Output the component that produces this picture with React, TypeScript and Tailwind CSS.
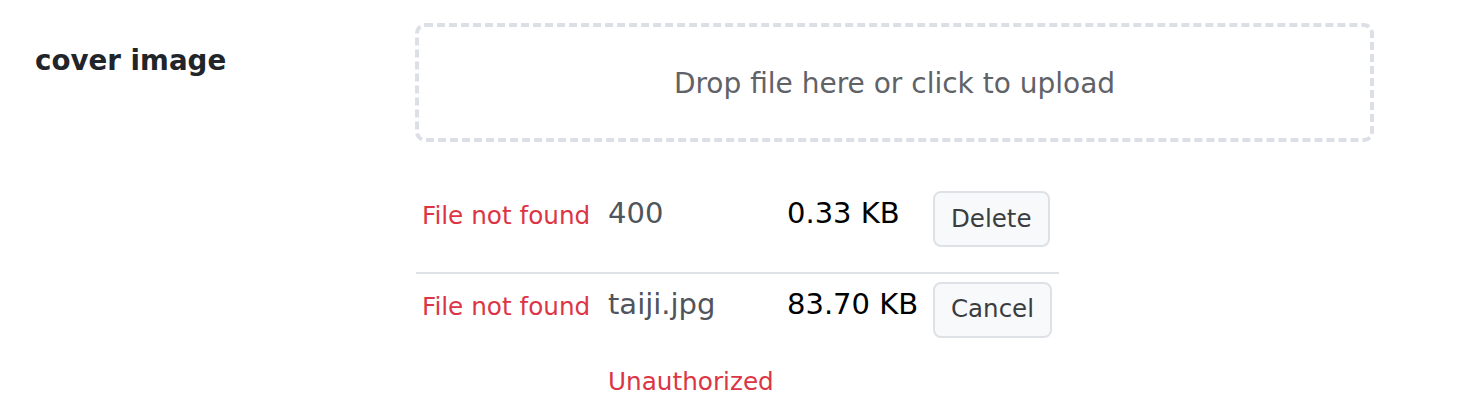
const font = "font-['DejaVu_Sans',Verdana,sans-serif]";

type FileRow = {
  status: string;
  name: string;
  size: string;
  action: string;
  error?: string;
};

const files: FileRow[] = [
  { status: "File not found", name: "400", size: "0.33 KB", action: "Delete" },
  {
    status: "File not found",
    name: "taiji.jpg",
    size: "83.70 KB",
    action: "Cancel",
    error: "Unauthorized",
  },
];

function Row({ file, first }: { file: FileRow; first: boolean }) {
  return (
    <div
      className={
        first
          ? "flex items-start pl-[6px] pb-[25px] border-b-2 border-[#dee2e6]"
          : "flex items-start pl-[6px] pt-[8px]"
      }
    >
      <div className="w-[186px] mt-[6px] text-[24.7px] leading-[1.5] text-[#dc3545]">
        {file.status}
      </div>
      <div className="w-[179px] mt-[1px]">
        <div className="text-[29px] leading-[1.5] text-[#50555b]">{file.name}</div>
        {file.error && (
          <div className="mt-[37px] text-[24.7px] leading-[1.5] text-[#dc3545]">
            {file.error}
          </div>
        )}
      </div>
      <div className="w-[146px] mt-[1px] text-[29px] leading-[1.5] text-black">{file.size}</div>
      <button className="px-[16px] py-[7.5px] text-[24.5px] leading-[1.5] text-[#3a3d40] bg-[#f8f9fa] border-2 border-[#dee2e6] rounded-[8px]">
        {file.action}
      </button>
    </div>
  );
}

export default function App() {
  return (
    <div className={`${font} bg-white w-[1462px] h-[414px] overflow-hidden flex pl-[35px] pt-[23px]`}>
      <div className="w-[380px] pt-[17px] text-[27.7px] leading-[1.5] font-bold text-[#212529]">
        cover image
      </div>
      <div className="flex flex-col">
        <div className="w-[959px] h-[119px] pt-[2px] flex items-center justify-center border-4 border-dashed border-[#dcdfe6] rounded-[10px] text-[28px] leading-[1.5] text-[#5f6368]">
          Drop file here or click to upload
        </div>
        <div className="w-[643px] ml-[1px] mt-[49px]">
          {files.map((f, i) => (
            <Row key={f.name} file={f} first={i === 0} />
          ))}
        </div>
      </div>
    </div>
  );
}
